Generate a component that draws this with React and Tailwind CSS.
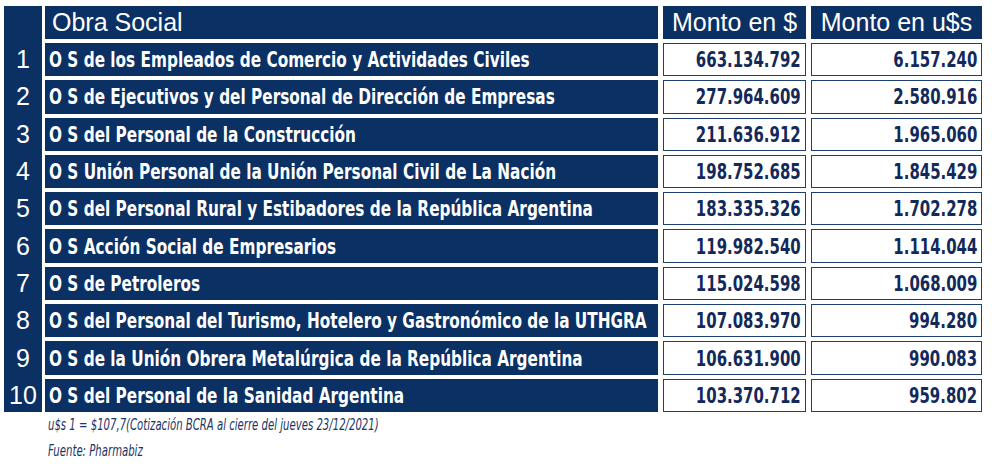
import React from "react";

const rows = [
  ["O S de los Empleados de Comercio y Actividades Civiles", "663.134.792", "6.157.240"],
  ["O S de Ejecutivos y del Personal de Dirección de Empresas", "277.964.609", "2.580.916"],
  ["O S del Personal de la Construcción", "211.636.912", "1.965.060"],
  ["O S Unión Personal de la Unión Personal Civil de La Nación", "198.752.685", "1.845.429"],
  ["O S del Personal Rural y Estibadores de la República Argentina", "183.335.326", "1.702.278"],
  ["O S Acción Social de Empresarios", "119.982.540", "1.114.044"],
  ["O S de Petroleros", "115.024.598", "1.068.009"],
  ["O S del Personal del Turismo, Hotelero y Gastronómico de la UTHGRA", "107.083.970", "994.280"],
  ["O S de la Unión Obrera Metalúrgica de la República Argentina", "106.631.900", "990.083"],
  ["O S del Personal de la Sanidad Argentina", "103.370.712", "959.802"],
];

const narrow = "font-['DejaVu_Sans_Condensed','DejaVu_Sans',sans-serif]";
const arial = "font-['Liberation_Sans',Arial,sans-serif]";

export default function App() {
  return (
    <div className="w-[992px] h-[465px] bg-white overflow-hidden pl-[4px] pt-[6px]">
      <div className="flex">
        <div className={`w-[38px] bg-[#0b3063] flex flex-col gap-[4px] ${arial} text-white text-[25px]`}>
          <div className="h-[33px]" />
          {rows.map((r, i) => (
            <div key={i} className="h-[33.3px] flex items-center justify-center leading-none">
              {i + 1}
            </div>
          ))}
        </div>
        <div className="ml-[3px] flex flex-col gap-[4px]">
          <div className={`flex h-[33px] ${arial} text-white text-[25px] leading-none`}>
            <div className="w-[613px] bg-[#0b3063] flex items-center pl-[7px]">Obra Social</div>
            <div className="ml-[5px] w-[143px] bg-[#0b3063] flex items-center justify-center">Monto en $</div>
            <div className="ml-[5px] w-[171px] bg-[#0b3063] flex items-center justify-center">Monto en u$s</div>
          </div>
          {rows.map((r, i) => (
            <div key={i} className={`flex h-[33.3px] ${narrow} font-bold text-[21px] leading-none`}>
              <div className="w-[613px] bg-[#0b3063] text-white flex items-center pl-[4px] pt-[2px]">
                <span className="inline-block shrink-0 whitespace-nowrap origin-left scale-x-[0.81]">{r[0]}</span>
              </div>
              <div className="ml-[5px] w-[143px] border-[1.5px] border-[#1d3f73] text-[#13295a] flex items-center justify-end pr-[4px] pt-[2px]">
                <span className="inline-block shrink-0 whitespace-nowrap origin-right scale-x-[0.79]">{r[1]}</span>
              </div>
              <div className="ml-[5px] w-[171px] border-[1.5px] border-[#1d3f73] text-[#13295a] flex items-center justify-end pr-[4px] pt-[2px]">
                <span className="inline-block shrink-0 whitespace-nowrap origin-right scale-x-[0.79]">{r[2]}</span>
              </div>
            </div>
          ))}
        </div>
      </div>
      <div className={`ml-[44px] mt-[6px] ${narrow} italic text-[15px] text-[#1b3566] leading-none`}>
        <div className="origin-left scale-x-[0.75] whitespace-nowrap">u$s 1 = $107,7(Cotización BCRA al cierre del jueves 23/12/2021)</div>
        <div className="mt-[11px] origin-left scale-x-[0.75] whitespace-nowrap">Fuente: Pharmabiz</div>
      </div>
    </div>
  );
}
